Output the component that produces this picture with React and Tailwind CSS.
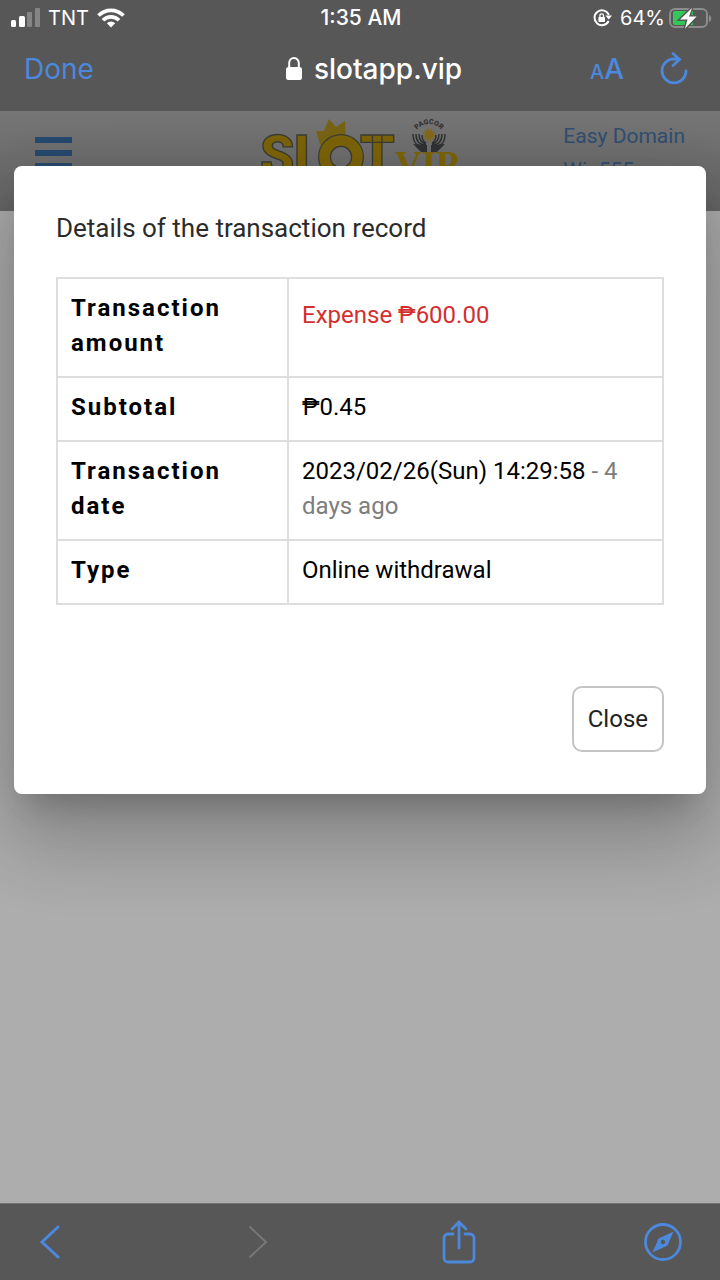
import { useState } from "react";

const links = ["Easy Domain", "Win555"];

function StatusBar() {
  return (
    <div className="grid h-9 grid-cols-3 items-center pl-[10px] pr-2 text-xl text-white">
      <div className="flex items-center gap-2">
        <svg width="30" height="20" viewBox="0 0 30 20" fill="#fff" aria-hidden="true">
          <rect x="1" y="12" width="5" height="7" rx="1.5" />
          <rect x="9" y="8" width="6" height="11" rx="1.5" />
          <rect x="17" y="4" width="5" height="15" rx="1" opacity="0.28" />
          <rect x="25" y="0" width="5" height="19" rx="1" opacity="0.28" />
        </svg>
        <span>TNT</span>
        <svg width="28" height="20" viewBox="0 0 28 20" fill="none" stroke="#fff" strokeWidth="3.6" aria-hidden="true">
          <path d="M1.5 7.6a17.6 17.6 0 0 1 25 0" />
          <path d="M6 12.2a11.2 11.2 0 0 1 16 0" />
          <path d="M14 19.5l-4.2-4.3a6 6 0 0 1 8.4 0z" fill="#fff" stroke="none" />
        </svg>
      </div>
      <span className="text-center text-[21px] font-medium">1:35 AM</span>
      <div className="flex items-center justify-end gap-1">
        <svg className="mr-1" width="19" height="18" viewBox="0 0 19 18" fill="none" stroke="#fff" strokeWidth="2" aria-hidden="true">
          <path d="M15.6 12A7.4 7.4 0 1 1 15.8 6" />
          <path d="M12.4 6.4h6.6l-3.2 4z" fill="#fff" stroke="none" />
          <rect x="5.4" y="8" width="6.6" height="5" rx="0.8" fill="#fff" stroke="none" />
          <path d="M6.9 8V6.6a1.8 1.8 0 0 1 3.6 0V8" strokeWidth="1.3" />
        </svg>
        <span>64%</span>
        <svg width="43" height="22" viewBox="0 0 43 22" aria-hidden="true">
          <rect x="1" y="2" width="37" height="18" rx="5" fill="none" stroke="#8c8c8c" strokeWidth="2" />
          <path d="M40 8v7c3-1 3-6 0-7z" fill="#8c8c8c" />
          <path d="M6 4h18v14H6a2 2 0 0 1-2-2V6a2 2 0 0 1 2-2z" fill="#32c759" />
          <path d="M23 1L11 12.5h7.5L16 21.5 27.5 9.5H20z" fill="#fff" stroke="#575757" strokeWidth="3" paintOrder="stroke" />
        </svg>
      </div>
    </div>
  );
}

function BrowserBar() {
  return (
    <div className="grid h-[75px] grid-cols-[1fr_auto_1fr] items-center pb-[9px] pl-6 pr-8 text-[#4c88dc]">
      <button type="button" className="justify-self-start text-[28px]">Done</button>
      <div className="flex items-center gap-3 pl-9 text-[28px] font-medium text-white">
        <svg width="16" height="24" viewBox="0 0 16 24" fill="none" stroke="#fff" strokeWidth="2" aria-hidden="true">
          <rect x="0" y="10" width="16" height="13" rx="2.5" fill="#fff" stroke="none" />
          <path d="M3.2 11V6a4.8 5 0 0 1 9.6 0V11" />
        </svg>
        <span>slotapp.vip</span>
      </div>
      <div className="flex items-center justify-end gap-9">
        <button type="button" className="font-medium" aria-label="Text size">
          <span className="text-xl">A</span>
          <span className="text-[28px]">A</span>
        </button>
        <button type="button" aria-label="Reload">
          <svg width="28" height="34" viewBox="0 0 28 34" fill="none" stroke="currentColor" strokeWidth="2.8" strokeLinecap="round" aria-hidden="true">
            <path d="M26 19a12 12 0 1 1-12-12.2l5 .4" />
            <path d="M13 1.5l6.5 6-6.5 6" />
          </svg>
        </button>
      </div>
    </div>
  );
}

function Logo() {
  return (
    <svg width="204" height="66" viewBox="0 0 204 66" role="img" aria-label="Slot VIP">
      <path d="M63 30L58 14l8 0 5-12 7 8 9-6 1 26z" fill="#7a6413" />
      <g fill="#7d6508" stroke="#3c3d36" strokeWidth="1.4" fontFamily="Roboto, sans-serif" fontWeight="900" fontSize="55">
        <text x="2" y="58">S</text>
        <text x="36" y="58">L</text>
        <text x="102" y="58">T</text>
      </g>
      <circle cx="83" cy="40" r="16.5" fill="none" stroke="#3c3d36" strokeWidth="13" />
      <circle cx="83" cy="40" r="16.5" fill="none" stroke="#7d6508" strokeWidth="10.6" />
      <text x="137" y="60" fontFamily="'Liberation Serif', serif" fontWeight="700" fontSize="37" fill="#7d6508">VIP</text>
      <path id="seal" d="M156 22a15 15 0 0 1 30 0" fill="none" />
      <text fontFamily="Roboto, sans-serif" fontWeight="900" fontSize="7" fill="#333" textAnchor="middle">
        <textPath href="#seal" startOffset="50%">PAGCOR</textPath>
      </text>
      <circle cx="171" cy="18" r="4.4" fill="#85691a" />
      <circle cx="171" cy="18" r="5.6" fill="none" stroke="#85691a" strokeWidth="2" strokeDasharray="1.6 1.4" />
      <g fill="none" stroke="#303235" strokeWidth="1.5">
        <path d="M155 17c0 10 5 13 13 13M158 17c0 8 4 11 10 11M161 17c0 6 3 9 7 10M164 18c0 4 2 7 4 8" />
        <path d="M187 17c0 10-5 13-13 13M184 17c0 8-4 11-10 11M181 17c0 6-3 9-7 10M178 18c0 4-2 7-4 8" />
      </g>
      <path d="M155 27l14 1v7h-6z" fill="#303235" />
      <path d="M187 27l-14 1v7h6z" fill="#303235" />
    </svg>
  );
}

function SiteHeader() {
  return (
    <header className="grid h-[100px] grid-cols-[1fr_auto_1fr] items-start overflow-hidden bg-linear-to-b from-[#777777] to-[#666666] px-[35px]">
      <button type="button" aria-label="Menu" className="flex w-[37px] flex-col gap-[7px] pt-[26px]">
        <span className="h-[6px] bg-[#284a70]" />
        <span className="h-[6px] bg-[#284a70]" />
        <span className="h-[6px] bg-[#284a70]" />
      </button>
      <div className="pt-[6px]">
        <Logo />
      </div>
      <nav className="flex flex-col justify-self-end pt-2 font-[Roboto,sans-serif] text-[21px] leading-[34px] text-[#2f4f72]">
        {links.map((link) => (
          <a key={link} href="#">{link}</a>
        ))}
      </nav>
    </header>
  );
}

function Row({ label, children }) {
  return (
    <tr>
      <th scope="row" className="w-[231px] border-2 border-[#dedede] px-[13px] pb-[15px] pt-3 text-left align-top font-bold tracking-[2px]">
        {label}
      </th>
      <td className="border-2 border-[#dedede] px-[13px] pb-[15px] pt-3 align-top">{children}</td>
    </tr>
  );
}

function TransactionDialog({ onClose }) {
  return (
    <div
      role="dialog"
      aria-labelledby="dialog-title"
      className="absolute inset-x-[14px] top-[55px] rounded-lg bg-white p-[42px] font-[Roboto,sans-serif] shadow-[0_22px_30px_-14px_rgba(0,0,0,0.2),0_48px_76px_6px_rgba(0,0,0,0.14),0_18px_92px_16px_rgba(0,0,0,0.12)]"
    >
      <h2 id="dialog-title" className="text-[26px] leading-10 text-[#2b2b2b]">Details of the transaction record</h2>
      <table className="mt-[29px] w-full border-collapse text-2xl leading-[35px] text-black">
        <tbody>
          <Row label="Transaction amount">
            <span className="block leading-[49px] text-[#d32f2f]">Expense ₱600.00</span>
          </Row>
          <Row label="Subtotal">₱0.45</Row>
          <Row label="Transaction date">
            2023/02/26(Sun) 14:29:58 <span className="text-[#7d7d7d]">- 4 days ago</span>
          </Row>
          <Row label="Type">Online withdrawal</Row>
        </tbody>
      </table>
      <div className="mt-[81px] flex justify-end">
        <button
          type="button"
          onClick={onClose}
          className="h-[66px] rounded-[10px] border-2 border-[#c4c4c4] px-[14px] text-2xl text-[#222222]"
        >
          Close
        </button>
      </div>
    </div>
  );
}

function BottomBar() {
  return (
    <footer className="flex h-[77px] items-center justify-between border-t border-[#737373] bg-[#575757] pl-[30px] pr-[37px] text-[#4c88dc]">
      <button type="button" aria-label="Back" className="flex w-10 justify-center">
        <svg width="24" height="34" viewBox="0 0 24 34" fill="none" stroke="currentColor" strokeWidth="3" strokeLinecap="round" aria-hidden="true">
          <path d="M20 2L4 17l16 15" />
        </svg>
      </button>
      <button type="button" aria-label="Forward" disabled className="flex w-10 justify-center text-[#777777]">
        <svg width="32" height="34" viewBox="0 0 32 34" fill="none" stroke="currentColor" strokeWidth="2" strokeLinecap="round" aria-hidden="true">
          <path d="M12 2l16 15L12 32" />
        </svg>
      </button>
      <button type="button" aria-label="Share" className="flex w-10 justify-center">
        <svg width="34" height="44" viewBox="0 0 34 44" fill="none" stroke="currentColor" strokeWidth="2.8" strokeLinecap="round" aria-hidden="true">
          <path d="M11 14H6a4 4 0 0 0-4 4v20a4 4 0 0 0 4 4h22a4 4 0 0 0 4-4V18a4 4 0 0 0-4-4h-5" />
          <path d="M17 28V3M10 9l7-7 7 7" />
        </svg>
      </button>
      <button type="button" aria-label="Open in browser" className="flex w-10 justify-center">
        <svg width="38" height="38" viewBox="0 0 38 38" fill="none" stroke="currentColor" strokeWidth="2.8" aria-hidden="true">
          <circle cx="19" cy="19" r="17.5" />
          <path
            d="M29.5 8.5L23.5 22.5 8.5 29.5 14.5 15.5zM19 16.8a2.2 2.2 0 1 0 0 4.4 2.2 2.2 0 0 0 0-4.4z"
            fill="currentColor"
            fillRule="evenodd"
            stroke="none"
          />
        </svg>
      </button>
    </footer>
  );
}

export default function App() {
  const [open, setOpen] = useState(true);

  return (
    <div className="flex min-h-screen flex-col bg-[#adadad] font-[Inter,sans-serif]">
      <div className="bg-[#575757]">
        <StatusBar />
        <BrowserBar />
      </div>
      <main className="relative flex-1 overflow-hidden">
        <SiteHeader />
        {open && <TransactionDialog onClose={() => setOpen(false)} />}
      </main>
      <BottomBar />
    </div>
  );
}
